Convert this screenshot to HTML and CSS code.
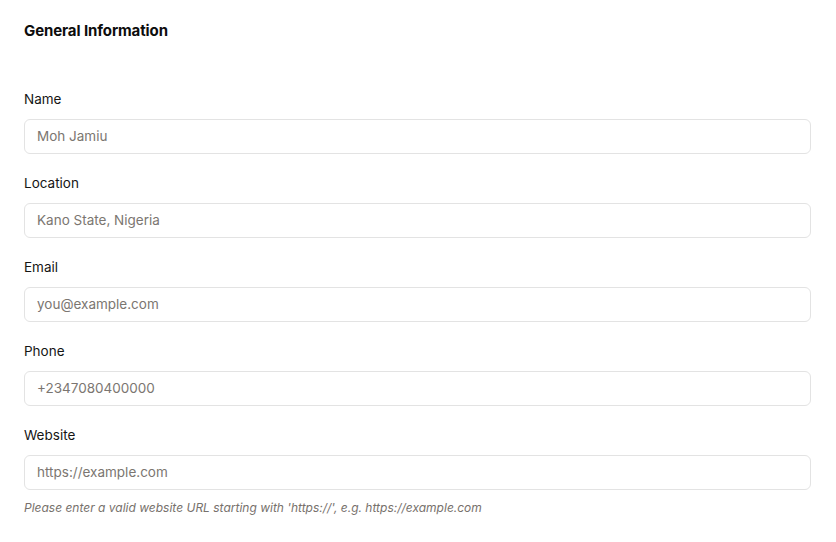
FILE: index.html
```html
<!DOCTYPE html>
<html>
<head>
<meta charset="utf-8">
<link rel="stylesheet" href="styles.css">
</head>
<body>
<div class="card">
  <h2 class="title">General Information</h2>
  <form class="form">
    <div class="field">
      <label class="label">Name</label>
      <input class="input" type="text" placeholder="Moh Jamiu">
    </div>
    <div class="field">
      <label class="label">Location</label>
      <input class="input" type="text" placeholder="Kano State, Nigeria">
    </div>
    <div class="field">
      <label class="label">Email</label>
      <input class="input" type="text" placeholder="you@example.com">
    </div>
    <div class="field">
      <label class="label">Phone</label>
      <input class="input" type="text" placeholder="+2347080400000">
    </div>
    <div class="field">
      <label class="label">Website</label>
      <input class="input" type="text" placeholder="https://example.com">
      <p class="help">Please enter a valid website URL starting with 'https://', e.g. https://example.com</p>
    </div>
  </form>
</div>
</body>
</html>
```
FILE: styles.css
```css
html, body {
  margin: 0;
  padding: 0;
  background: #ffffff;
}
body {
  font-family: Inter, "Liberation Sans", sans-serif;
  color: #111111;
}
.card {
  padding: 21px 25px 0 24px;
}
.title {
  margin: 0;
  font-size: 15px;
  line-height: 20px;
  font-weight: 700;
  letter-spacing: -0.1px;
  color: #0d0d0d;
}
.form {
  margin-top: 48px;
  display: flex;
  flex-direction: column;
  gap: 19px;
}
.field {
  display: flex;
  flex-direction: column;
}
.label {
  font-size: 13.5px;
  line-height: 20px;
  font-weight: 400;
  color: #151515;
  margin-bottom: 10px;
}
.input {
  box-sizing: border-box;
  height: 35px;
  border: 1px solid #e3e3e3;
  border-radius: 6px;
  padding: 0 12px 1px;
  font-family: inherit;
  font-size: 13.5px;
  color: #333;
  background: #fff;
  outline: none;
}
.input::placeholder {
  color: #7b7671;
}
.help {
  margin: 10px 0 0 0;
  font-size: 12px;
  line-height: 16px;
  font-style: italic;
  color: #77716c;
}
```
